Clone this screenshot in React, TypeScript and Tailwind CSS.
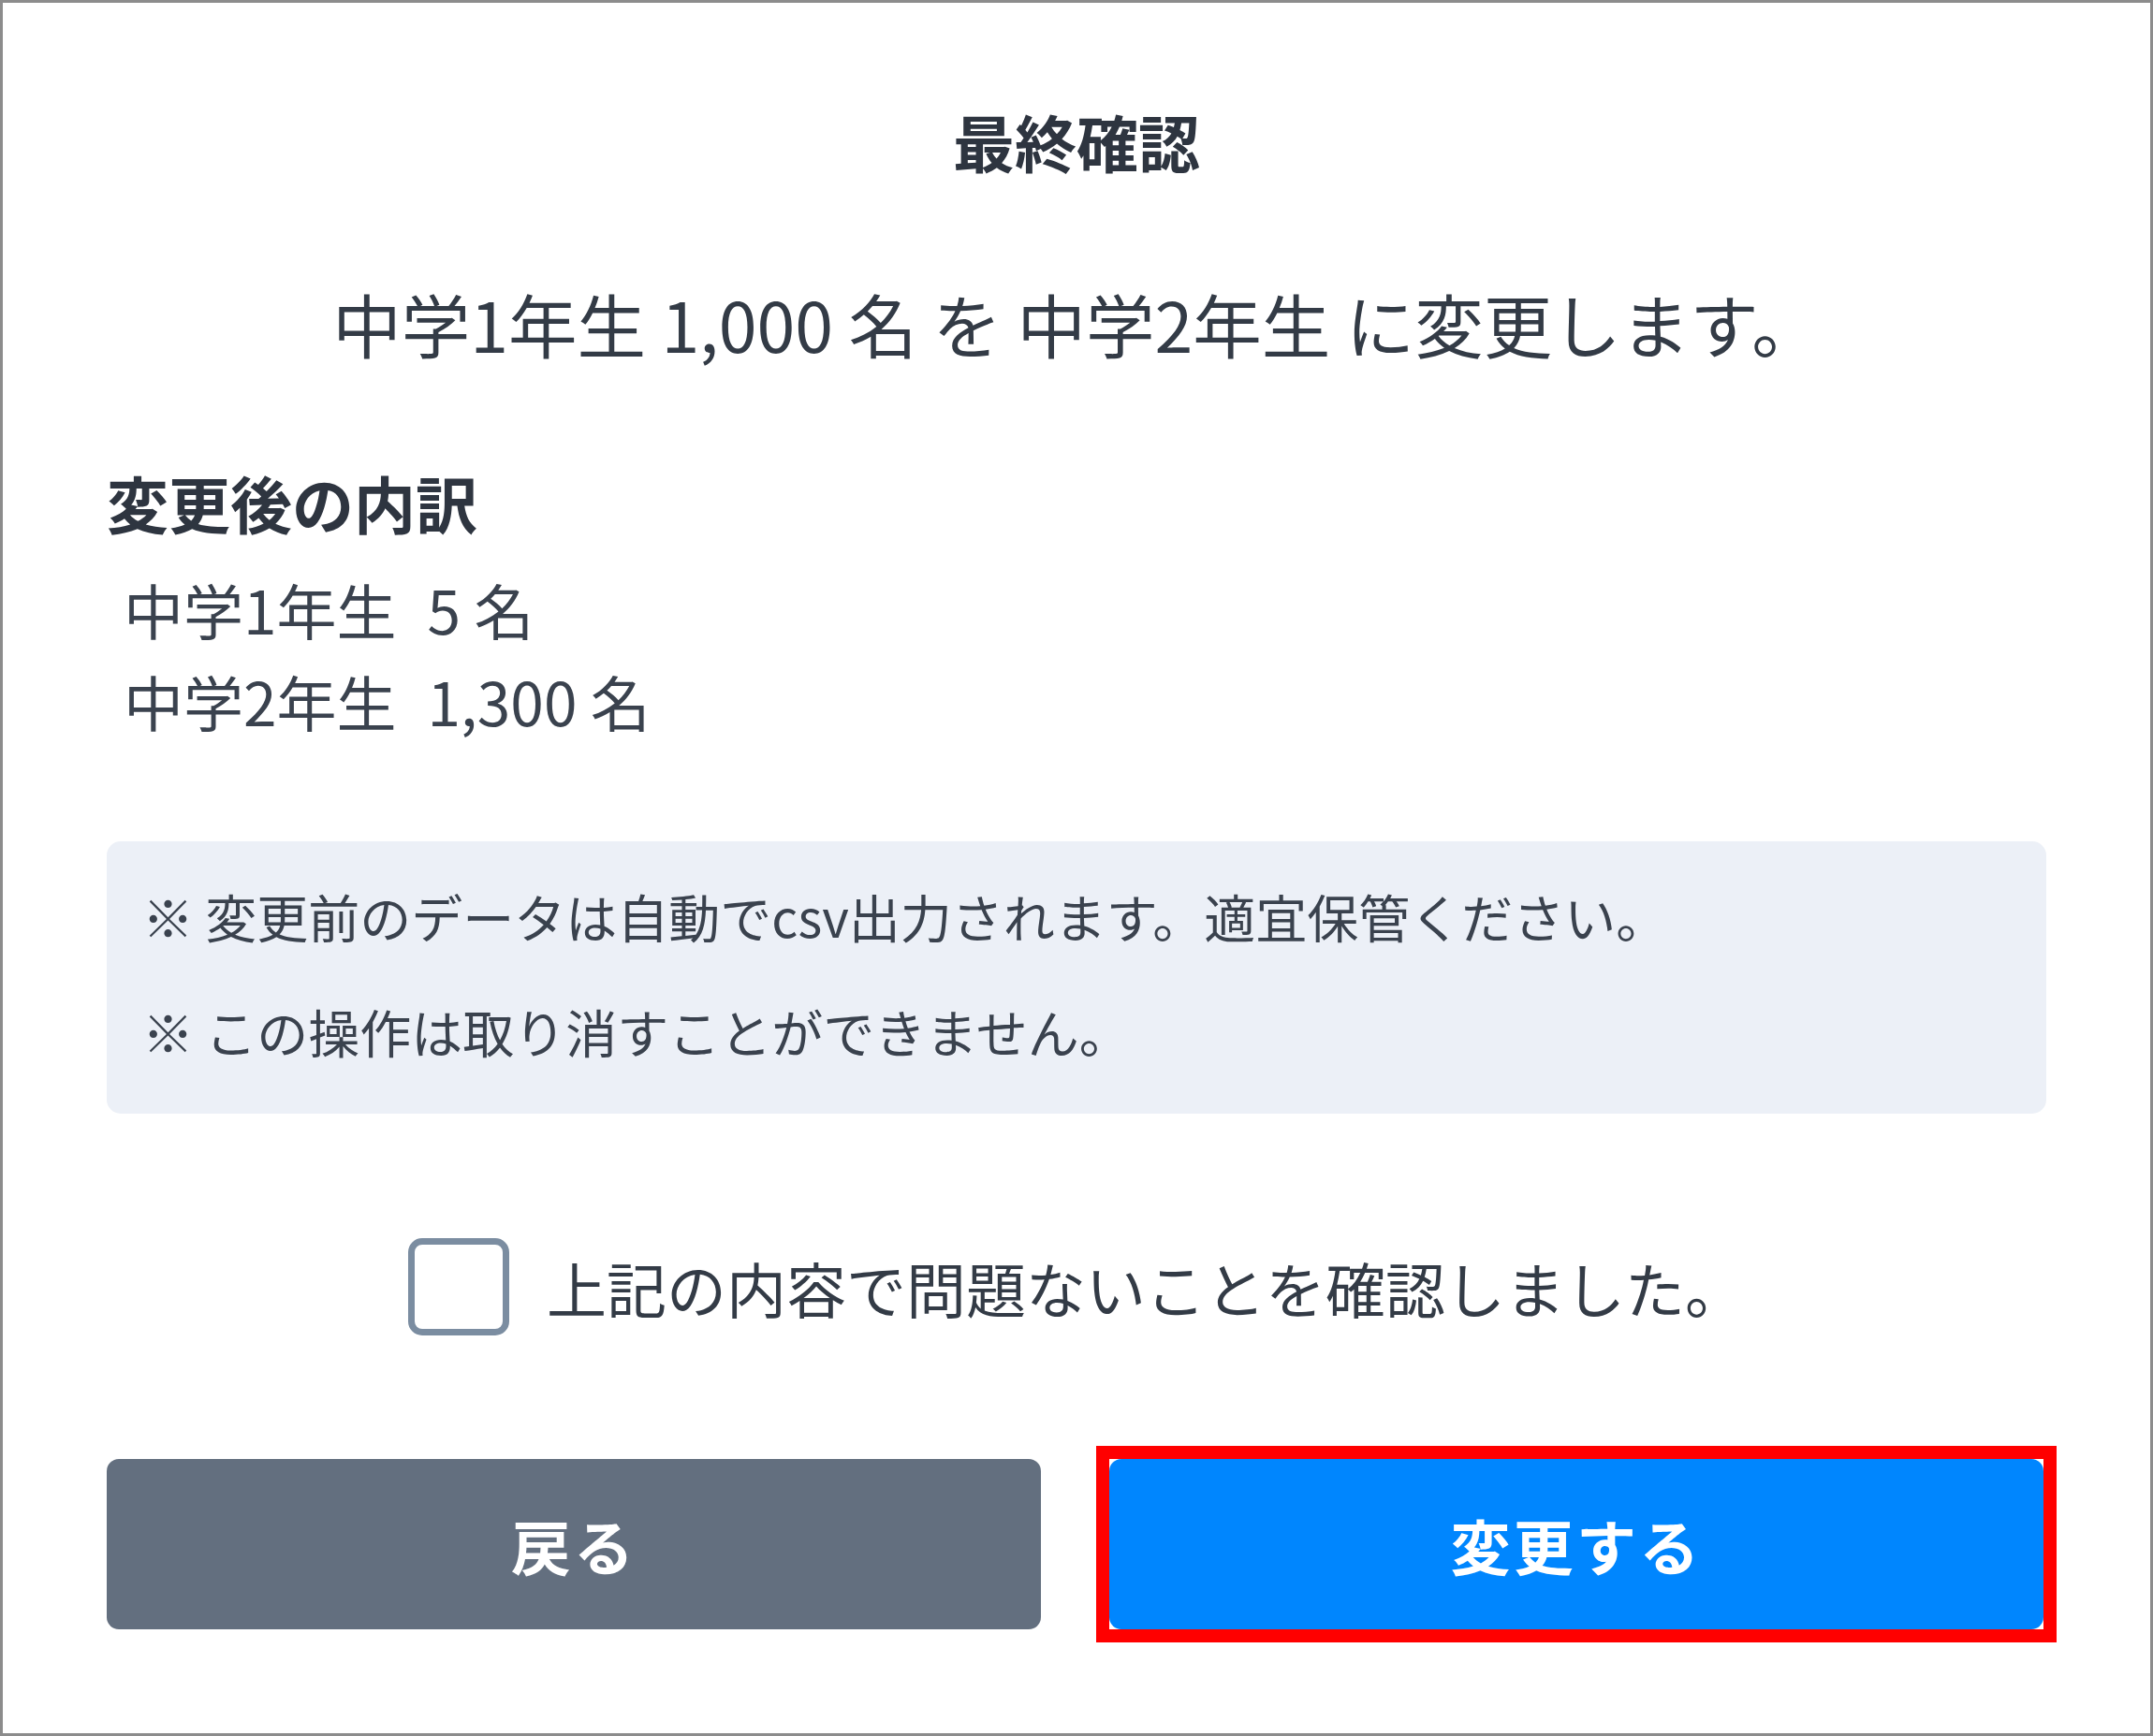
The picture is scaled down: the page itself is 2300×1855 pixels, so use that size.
import React, { useState } from 'react';

const rows = [
  { label: '中学1年生', count: '5' },
  { label: '中学2年生', count: '1,300' },
];

const notes = [
  '変更前のデータは自動でcsv出力されます。適宜保管ください。',
  'この操作は取り消すことができません。',
];

const App: React.FC = () => {
  const [checked, setChecked] = useState(false);

  return (
    <div className="w-[2300px] h-[1855px] bg-white border-[3px] border-[#8c8c8c] px-[111px] pt-[102px] font-['Noto_Sans_CJK_JP',sans-serif] text-[#2f3742]">
      {/* タイトル */}
      <h1 className="text-center text-[66px] leading-[90px] font-bold text-[#2e3540]">
        最終確認
      </h1>

      <p className="mt-[100px] text-center text-[73.5px] leading-[100px] text-[#333b46]">
        中学1年生 1,000 名 を 中学2年生 に変更します。
      </p>

      {/* 変更後の内訳 */}
      <h2 className="mt-[96px] text-[66px] leading-[90px] font-bold text-[#2e3540]">
        変更後の内訳
      </h2>
      <div className="mt-[20px] pl-[18px]">
        {rows.map((row) => (
          <div key={row.label} className="flex text-[64px] leading-[98px] text-[#3a424e]">
            <span>{row.label}</span>
            <span className="ml-[33px]">
              {row.count} 名
            </span>
          </div>
        ))}
      </div>

      {/* 注意事項 */}
      <div className="mt-[102px] bg-[#ecf0f7] rounded-[15px] pl-[38px] pr-10 pt-[39px] pb-[49px]">
        {notes.map((note, i) => (
          <p
            key={i}
            className={`text-[55px] leading-[80px] text-[#3a424e] ${i > 0 ? 'mt-[43px]' : ''}`}
          >
            <span className="font-bold">※</span> {note}
          </p>
        ))}
      </div>

      {/* 確認チェック */}
      <label className="mt-[133px] flex items-center justify-center gap-[40px] cursor-pointer">
        <button
          type="button"
          onClick={() => setChecked(!checked)}
          className="w-[108px] h-[104px] border-[7px] border-[#7b8da1] rounded-[15px] bg-white shrink-0"
        />
        <span className="text-[64px] leading-[90px] text-[#333b46]">
          上記の内容で問題ないことを確認しました。
        </span>
      </label>

      {/* ボタン */}
      <div className="mt-[132px] grid grid-cols-2 gap-[73px] pr-[3px]">
        <button
          type="button"
          className="h-[182px] rounded-[13px] bg-[#636f7f] text-white text-[64px] font-bold tracking-[0.05em]"
        >
          戻る
        </button>
        <div className="relative">
          <button
            type="button"
            className="w-full h-[182px] rounded-[13px] bg-[#0086fe] text-white text-[64px] font-bold tracking-[0.05em]"
          >
            変更する
          </button>
          <div className="absolute -inset-[14px] border-[14px] border-[#ff0000] pointer-events-none" />
        </div>
      </div>
    </div>
  );
};

export default App;
